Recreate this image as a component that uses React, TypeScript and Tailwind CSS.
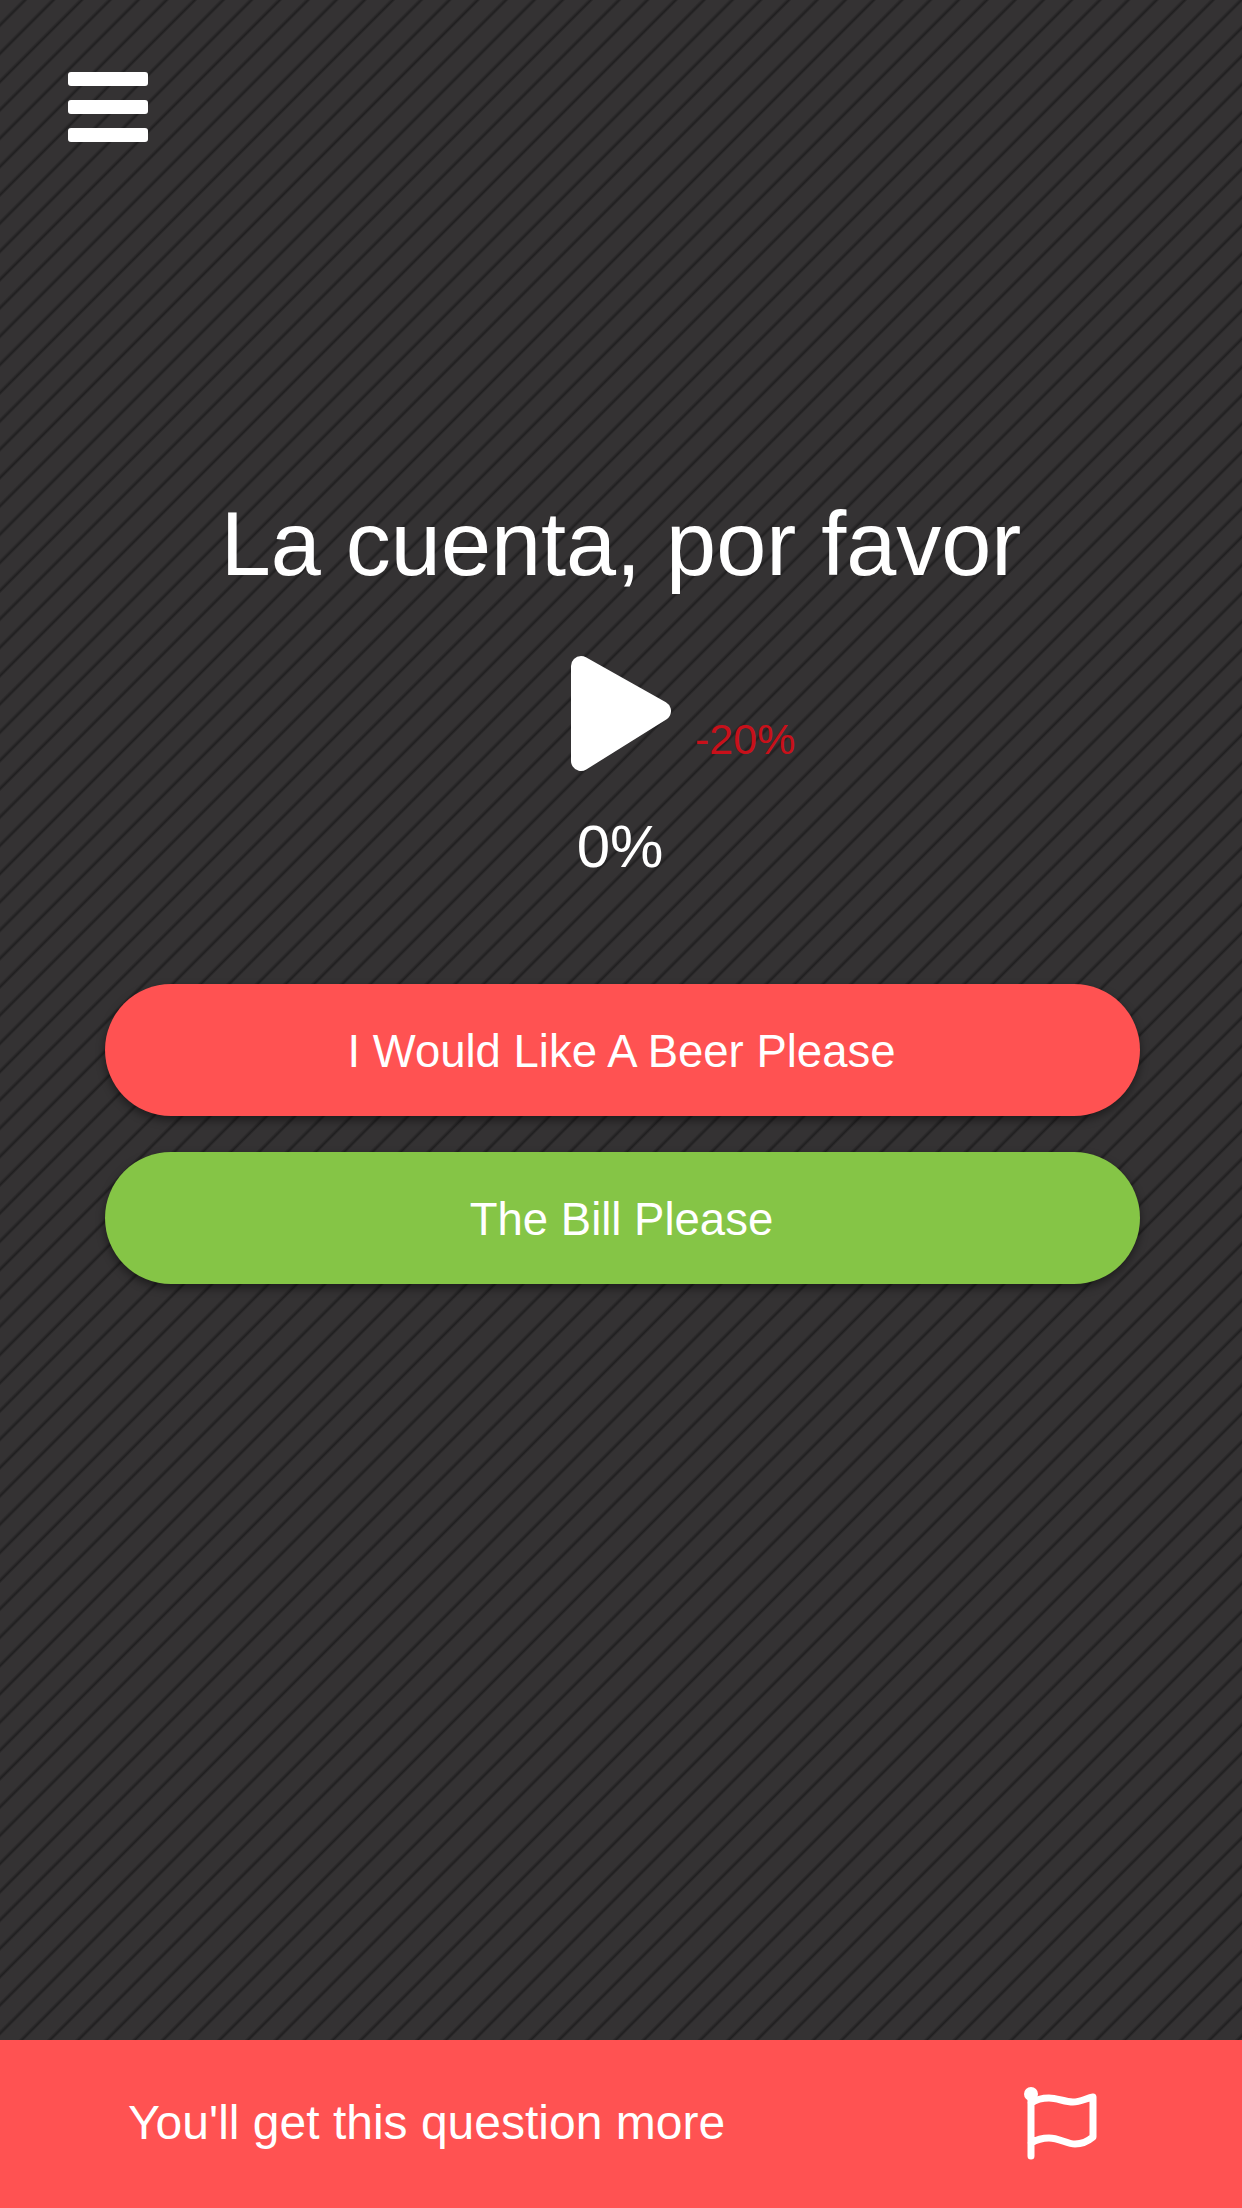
const Hamburger = () => (
  <div className="flex w-20 flex-col gap-[14px]">
    <div className="h-[14px] rounded-[3px] bg-white" />
    <div className="h-[14px] rounded-[3px] bg-white" />
    <div className="h-[14px] rounded-[3px] bg-white" />
  </div>
);

const PlayIcon = () => (
  <svg width="100" height="116" viewBox="0 0 100 116" className="block">
    <path
      d="M10 10 L90 55 L10 105 Z"
      fill="#fff"
      stroke="#fff"
      strokeWidth="20"
      strokeLinejoin="round"
    />
  </svg>
);

const FlagIcon = () => (
  <svg width="76" height="76" viewBox="0 0 76 76" fill="none" className="block">
    <circle cx="8" cy="8" r="7" fill="#fff" />
    <path
      d="M8 8 V70 M8 17 C14 13 20 12 26 12 C34 12 42 16 50 16 C57 16 64 12 70 11 V51 C64 56 58 58 52 58 C44 58 36 52 26 52 C19 52 13 54 8 57"
      stroke="#fff"
      strokeWidth="7"
      strokeLinecap="round"
      strokeLinejoin="round"
    />
  </svg>
);

const AnswerButton = ({ label, className }: { label: string; className: string }) => (
  <button
    className={`flex h-[132px] w-full items-center justify-center rounded-full pt-[4px] pr-[2px] text-[45.5px] text-white shadow-[0_4px_10px_rgba(0,0,0,0.45)] ${className}`}
  >
    {label}
  </button>
);

export default function App() {
  return (
    <div className="flex h-[2208px] w-[1242px] flex-col overflow-hidden bg-[#343233] bg-[repeating-linear-gradient(135deg,#343233_0px,#343233_15px,#201f20_18px,#343233_20px)] font-['Liberation_Sans',sans-serif]">
      <div className="flex-1">
        <div className="pt-[72px] pl-[68px]">
          <Hamburger />
        </div>

        <h1 className="mt-[352px] text-center text-[90px] leading-[100px] font-normal text-white">
          La cuenta, por favor
        </h1>

        <div className="relative mx-auto mt-[62px] w-[100px]">
          <PlayIcon />
          <span className="absolute top-[59px] left-[124px] text-[43px] leading-[48px] text-[#c8101a]">
            -20%
          </span>
        </div>

        <p className="mt-[41px] pr-[2px] text-center text-[60px] leading-[68px] text-white">0%</p>

        <div className="mt-[103px] flex flex-col gap-9 pr-[102px] pl-[105px]">
          <AnswerButton label="I Would Like A Beer Please" className="bg-[#ff5252]" />
          <AnswerButton label="The Bill Please" className="bg-[#85c546]" />
        </div>
      </div>

      <div className="flex h-[168px] items-center justify-between bg-[#ff5252] pr-[143px] pl-[128px]">
        <span className="-mt-[2px] text-[48px] text-white">You'll get this question more</span>
        <FlagIcon />
      </div>
    </div>
  );
}
